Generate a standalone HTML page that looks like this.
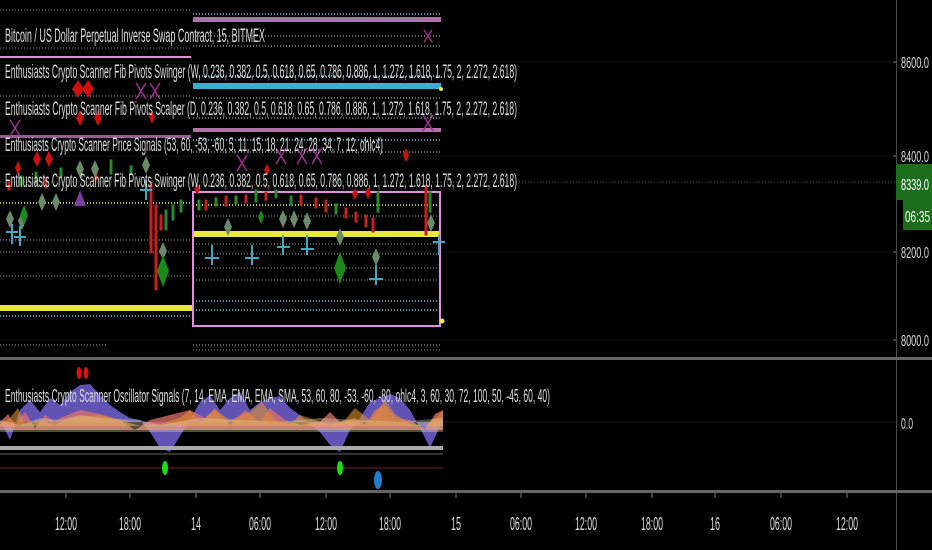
<!DOCTYPE html>
<html><head><meta charset="utf-8">
<style>
html,body{margin:0;padding:0;background:#000;width:932px;height:550px;overflow:hidden}
svg{display:block}
text{font-family:"Liberation Sans Narrow","Liberation Sans",sans-serif;fill:#dcdcdc}
</style></head><body>
<svg width="932" height="550" viewBox="0 0 932 550" xmlns="http://www.w3.org/2000/svg">
<rect width="932" height="550" fill="#000"/>
<g stroke="#141414" stroke-width="1">
<line x1="0" y1="62" x2="896" y2="62"/><line x1="0" y1="156" x2="896" y2="156"/>
<line x1="0" y1="252" x2="896" y2="252"/><line x1="0" y1="340" x2="896" y2="340"/>
</g>
<g stroke-dasharray="1 2" stroke-width="2">
<line x1="0" y1="10" x2="192" y2="10" stroke="#444"/>
<line x1="0" y1="48" x2="192" y2="48" stroke="#444"/>
<line x1="0" y1="96" x2="192" y2="96" stroke="#555"/>
<line x1="0" y1="203" x2="192" y2="203" stroke="#bdbd3a"/>
<line x1="0" y1="240" x2="192" y2="240" stroke="#555"/>
<line x1="0" y1="252" x2="192" y2="252" stroke="#555"/>
<line x1="0" y1="276" x2="192" y2="276" stroke="#555"/>
<line x1="0" y1="316" x2="192" y2="316" stroke="#3aa0b8"/>
<line x1="0" y1="345" x2="108" y2="345" stroke="#555"/>
<line x1="193" y1="14" x2="440" y2="14" stroke="#3aa0b8"/>
<line x1="193" y1="36" x2="440" y2="36" stroke="#666"/>
<line x1="193" y1="46" x2="440" y2="46" stroke="#666"/>
<line x1="193" y1="76" x2="440" y2="76" stroke="#3aa0b8"/>
<line x1="193" y1="98" x2="440" y2="98" stroke="#666"/>
<line x1="193" y1="118" x2="440" y2="118" stroke="#666"/>
<line x1="193" y1="140" x2="440" y2="140" stroke="#3aa0b8"/>
<line x1="193" y1="152" x2="440" y2="152" stroke="#666"/>
<line x1="193" y1="205" x2="440" y2="205" stroke="#bdbd3a"/>
<line x1="193" y1="216" x2="440" y2="216" stroke="#555"/>
<line x1="193" y1="244" x2="440" y2="244" stroke="#555"/>
<line x1="193" y1="254" x2="440" y2="254" stroke="#555"/>
<line x1="193" y1="268" x2="440" y2="268" stroke="#555"/>
<line x1="193" y1="280" x2="440" y2="280" stroke="#555"/>
<line x1="193" y1="301" x2="440" y2="301" stroke="#3aa0b8"/>
<line x1="193" y1="310" x2="440" y2="310" stroke="#3aa0b8"/>
<line x1="193" y1="345" x2="440" y2="345" stroke="#555"/>
<line x1="193" y1="350" x2="440" y2="350" stroke="#444"/>
<line x1="0" y1="182" x2="896" y2="182" stroke="#2a7a2a" stroke-width="1"/>
</g>
<rect x="193" y="17" width="248" height="5" fill="#b070a8"/>
<rect x="193" y="83" width="248" height="6" fill="#3ab0d0"/>
<rect x="193" y="128" width="248" height="4" fill="#b070a8"/>
<rect x="0" y="56" width="191" height="2" fill="#e090d8"/>
<rect x="0" y="135" width="191" height="3" fill="#906090"/>
<rect x="0" y="305" width="192" height="6" fill="#e8e840"/>
<rect x="193" y="231" width="247" height="6" fill="#e8e840"/>
<rect x="193" y="192" width="247" height="134" fill="none" stroke="#e090e0" stroke-width="2"/>
<circle cx="441" cy="89" r="2" fill="#ee4"/><circle cx="442" cy="321" r="2.5" fill="#ee4"/>
<g stroke-width="1">
<g fill="#2a8a2a" stroke="#2a8a2a">
<rect x="20" y="176" width="2" height="10"/><rect x="35" y="172" width="2" height="12"/><rect x="60" y="168" width="2" height="9"/><rect x="80" y="165" width="2" height="12"/><rect x="110" y="160" width="2" height="14"/><rect x="130" y="166" width="2" height="8"/><rect x="165" y="210" width="2" height="20"/><rect x="172" y="205" width="2" height="15"/><rect x="180" y="200" width="2" height="12"/><rect x="198" y="200" width="2" height="10"/><rect x="215" y="198" width="2" height="8"/><rect x="235" y="196" width="2" height="8"/><rect x="255" y="190" width="2" height="12"/><rect x="275" y="190" width="2" height="8"/><rect x="290" y="196" width="2" height="9"/><rect x="335" y="204" width="2" height="10"/><rect x="377" y="192" width="2" height="20"/><rect x="429" y="192" width="2" height="20"/>
</g>
<g fill="#c82020" stroke="#c82020">
<rect x="8" y="180" width="2" height="10"/><rect x="45" y="178" width="2" height="10"/><rect x="95" y="170" width="2" height="10"/><rect x="150" y="183" width="2" height="70"/><rect x="155" y="205" width="2" height="85"/><rect x="160" y="215" width="2" height="15"/><rect x="205" y="200" width="2" height="10"/><rect x="225" y="196" width="2" height="10"/><rect x="245" y="195" width="2" height="8"/><rect x="265" y="192" width="2" height="8"/><rect x="300" y="195" width="2" height="10"/><rect x="315" y="198" width="2" height="10"/><rect x="325" y="200" width="2" height="12"/><rect x="345" y="208" width="2" height="10"/><rect x="355" y="212" width="2" height="10"/><rect x="365" y="215" width="2" height="12"/><rect x="372" y="218" width="2" height="14"/><rect x="425" y="185" width="2" height="50"/><rect x="405" y="150" width="2" height="10"/>
</g>
</g>
<g fill="#cc1010">
<path d="M78 80l6 9-6 9-6-9z"/><path d="M88 80l6 9-6 9-6-9z"/><path d="M80 110l4 8-4 8-4-8z"/><path d="M98 110l4 8-4 8-4-8z"/><path d="M37 151l4 8-4 8-4-8z"/><path d="M49 151l4 8-4 8-4-8z"/><path d="M18 161l3 7-3 7-3-7z"/><path d="M152 110l3 7-3 7-3-7z"/><path d="M406 148l3 7-3 7-3-7z"/><path d="M197 183l3 6-3 6-3-6z"/><path d="M355 188l3 6-3 6-3-6z"/><path d="M368 187l3 6-3 6-3-6z"/><path d="M267 164l3 6-3 6-3-6z"/>
</g>
<g stroke="#a03090" stroke-width="1.5">
<path d="M136 83l10 16M146 83l-10 16M150 83l10 16M160 83l-10 16M10 120l10 16M20 120l-10 16M237 155l10 16M247 155l-10 16M276 148l10 16M286 148l-10 16M297 148l10 16M307 148l-10 16M312 148l10 16M322 148l-10 16M423 115l10 16M433 115l-10 16M424 30l8 12M432 30l-8 12"/>
</g>
<path d="M80 190l6 16h-12z" fill="#7a40a0"/>
<g fill="#6a8a6a">
<path d="M10 210l4 9-4 9-4-9z"/><path d="M22 212l4 9-4 9-4-9z"/><path d="M42 193l4 9-4 9-4-9z"/><path d="M56 193l4 9-4 9-4-9z"/><path d="M80 160l4 9-4 9-4-9z"/><path d="M95 160l4 9-4 9-4-9z"/><path d="M146 156l4 9-4 9-4-9z"/><path d="M163 242l4 9-4 9-4-9z"/><path d="M228 218l4 9-4 9-4-9z"/><path d="M283 210l4 9-4 9-4-9z"/><path d="M294 210l4 9-4 9-4-9z"/><path d="M307 212l4 9-4 9-4-9z"/><path d="M340 228l4 9-4 9-4-9z"/><path d="M376 248l4 9-4 9-4-9z"/><path d="M431 214l4 9-4 9-4-9z"/>
</g>
<g fill="#1a8a1a"><path d="M163 255l6 16-6 16-6-16z"/><path d="M340 252l6 16-6 16-6-16z"/><path d="M261 210l3 7-3 7-3-7z"/><path d="M24 205l4 10-4 10-4-10z"/></g>
<g stroke="#40a8c0" stroke-width="2">
<path d="M12 224v20M6 232h12M20 226v20M14 237h12M146 180v20M140 190h12M212 245v20M205 258h14M252 245v20M245 258h14M283 235v20M277 247h13M307 235v20M301 249h13M376 265v20M369 279h14M439 235v20M433 242h12"/>
</g>
<g font-size="19">
<text x="5" y="42" textLength="260" lengthAdjust="spacingAndGlyphs">Bitcoin / US Dollar Perpetual Inverse Swap Contract, 15, BITMEX</text>
<text x="5" y="78" textLength="512" lengthAdjust="spacingAndGlyphs">Enthusiasts Crypto Scanner Fib Pivots Swinger (W, 0.236, 0.382, 0.5, 0.618, 0.65, 0.786, 0.886, 1, 1.272, 1.618, 1.75, 2, 2.272, 2.618)</text>
<text x="5" y="115" textLength="512" lengthAdjust="spacingAndGlyphs">Enthusiasts Crypto Scanner Fib Pivots Scalper (D, 0.236, 0.382, 0.5, 0.618, 0.65, 0.786, 0.886, 1, 1.272, 1.618, 1.75, 2, 2.272, 2.618)</text>
<text x="5" y="151" textLength="378" lengthAdjust="spacingAndGlyphs">Enthusiasts Crypto Scanner Price Signals (53, 60, -53, -60, 5, 11, 15, 18, 21, 24, 28, 34, 7, 12, ohlc4)</text>
<text x="5" y="187" textLength="512" lengthAdjust="spacingAndGlyphs">Enthusiasts Crypto Scanner Fib Pivots Swinger (W, 0.236, 0.382, 0.5, 0.618, 0.65, 0.786, 0.886, 1, 1.272, 1.618, 1.75, 2, 2.272, 2.618)</text>
</g>
<line x1="896.5" y1="0" x2="896.5" y2="550" stroke="#4a4a4a"/>
<rect x="0" y="357" width="932" height="3" fill="#666"/>
<rect x="0" y="490" width="932" height="3" fill="#666"/>
<g font-size="16">
<text x="901" y="68" textLength="28" lengthAdjust="spacingAndGlyphs">8600.0</text>
<text x="901" y="162" textLength="28" lengthAdjust="spacingAndGlyphs">8400.0</text>
<text x="901" y="258" textLength="28" lengthAdjust="spacingAndGlyphs">8200.0</text>
<text x="901" y="346" textLength="28" lengthAdjust="spacingAndGlyphs">8000.0</text>
<text x="901" y="429" textLength="12" lengthAdjust="spacingAndGlyphs">0.0</text>
</g>
<rect x="896" y="164" width="36" height="36" fill="#1c6e1c"/>
<text x="901" y="190" font-size="16" textLength="28" lengthAdjust="spacingAndGlyphs" style="fill:#fff">8339.0</text>
<rect x="903" y="200" width="29" height="30" fill="#1c6e1c"/>
<text x="905" y="222" font-size="16" textLength="25" lengthAdjust="spacingAndGlyphs" style="fill:#fff">06:35</text>
<g stroke="#777"><line x1="893" y1="62" x2="896" y2="62"/><line x1="893" y1="156" x2="896" y2="156"/><line x1="893" y1="252" x2="896" y2="252"/><line x1="893" y1="340" x2="896" y2="340"/><line x1="893" y1="422" x2="896" y2="422"/></g>
<line x1="0" y1="422" x2="896" y2="422" stroke="#1a1a1a"/>
<path d="M0 420 L10 440 L20 410 L30 400 L40 412 L50 398 L60 405 L70 392 L80 385 L90 384 L100 395 L110 405 L120 412 L130 418 L140 420 L150 432 L160 448 L170 452 L180 436 L190 420 L200 402 L210 395 L220 410 L230 398 L240 392 L250 410 L260 402 L270 398 L280 396 L290 408 L300 415 L310 425 L320 432 L330 445 L340 452 L350 430 L360 418 L370 402 L380 398 L390 394 L400 398 L410 410 L420 428 L430 448 L443 420 L443 422 L0 422Z" fill="#6a5cc8" opacity="0.9"/>
<path d="M0 422 L8 414 L15 425 L25 412 L35 428 L45 415 L55 422 L60 418 L80 410 L100 414 L120 420 L135 430 L150 420 L170 415 L190 410 L205 418 L215 408 L230 425 L245 410 L260 422 L270 408 L285 420 L300 425 L320 422 L330 412 L340 422 L355 418 L365 425 L375 410 L385 405 L395 418 L410 420 L425 430 L435 414 L443 410 L443 430 L0 430Z" fill="#e07068" opacity="0.75"/>
<path d="M0 424 L10 418 L18 408 L25 424 L40 420 L55 425 L65 420 L80 416 L100 415 L120 420 L140 426 L160 424 L180 418 L190 410 L200 422 L215 410 L230 420 L250 412 L262 402 L275 420 L290 424 L300 415 L315 420 L330 425 L345 420 L355 408 L370 420 L378 410 L385 400 L395 414 L410 424 L425 426 L435 418 L443 410 L443 426 L0 426Z" fill="#e09030" opacity="0.6"/>
<path d="M0 420 L20 425 L40 418 L60 420 L80 415 L100 418 L140 420 L160 425 L200 418 L240 420 L280 422 L320 418 L360 420 L400 422 L443 418 L443 432 L0 432Z" fill="#e8e0b0" opacity="0.35"/>
<rect x="0" y="446" width="443" height="4" fill="#aaa"/>
<rect x="0" y="453" width="443" height="2" fill="#333"/>
<line x1="0" y1="468" x2="443" y2="468" stroke="#3a1010" stroke-width="2"/>
<ellipse cx="79" cy="373" rx="2.5" ry="6" fill="#e01010"/><ellipse cx="86" cy="373" rx="2.5" ry="6" fill="#e01010"/>
<ellipse cx="165" cy="468" rx="3" ry="7" fill="#10e010"/><ellipse cx="340" cy="468" rx="3" ry="7" fill="#10e010"/>
<ellipse cx="378" cy="480" rx="4" ry="9" fill="#2080d0"/>
<text x="5" y="402" font-size="18" textLength="545" lengthAdjust="spacingAndGlyphs">Enthusiasts Crypto Scanner Oscillator Signals (7, 14, EMA, EMA, EMA, SMA, 53, 60, 80, -53, -60, -80, ohlc4, 3, 60, 30, 72, 100, 50, -45, 60, 40)</text>
<g stroke="#777"><line x1="66" y1="493" x2="66" y2="498"/><line x1="130" y1="493" x2="130" y2="498"/><line x1="196" y1="493" x2="196" y2="498"/><line x1="260" y1="493" x2="260" y2="498"/><line x1="326" y1="493" x2="326" y2="498"/><line x1="390" y1="493" x2="390" y2="498"/><line x1="456" y1="493" x2="456" y2="498"/><line x1="521" y1="493" x2="521" y2="498"/><line x1="586" y1="493" x2="586" y2="498"/><line x1="652" y1="493" x2="652" y2="498"/><line x1="715" y1="493" x2="715" y2="498"/><line x1="781" y1="493" x2="781" y2="498"/><line x1="847" y1="493" x2="847" y2="498"/></g>
<g font-size="18" text-anchor="middle">
<text x="66" y="530" textLength="22" lengthAdjust="spacingAndGlyphs">12:00</text><text x="130" y="530" textLength="22" lengthAdjust="spacingAndGlyphs">18:00</text><text x="196" y="530" textLength="10" lengthAdjust="spacingAndGlyphs">14</text><text x="260" y="530" textLength="22" lengthAdjust="spacingAndGlyphs">06:00</text><text x="326" y="530" textLength="22" lengthAdjust="spacingAndGlyphs">12:00</text><text x="390" y="530" textLength="22" lengthAdjust="spacingAndGlyphs">18:00</text><text x="456" y="530" textLength="10" lengthAdjust="spacingAndGlyphs">15</text><text x="521" y="530" textLength="22" lengthAdjust="spacingAndGlyphs">06:00</text><text x="586" y="530" textLength="22" lengthAdjust="spacingAndGlyphs">12:00</text><text x="652" y="530" textLength="22" lengthAdjust="spacingAndGlyphs">18:00</text><text x="715" y="530" textLength="10" lengthAdjust="spacingAndGlyphs">16</text><text x="781" y="530" textLength="22" lengthAdjust="spacingAndGlyphs">06:00</text><text x="847" y="530" textLength="22" lengthAdjust="spacingAndGlyphs">12:00</text>
</g>
</svg>
</body></html>
